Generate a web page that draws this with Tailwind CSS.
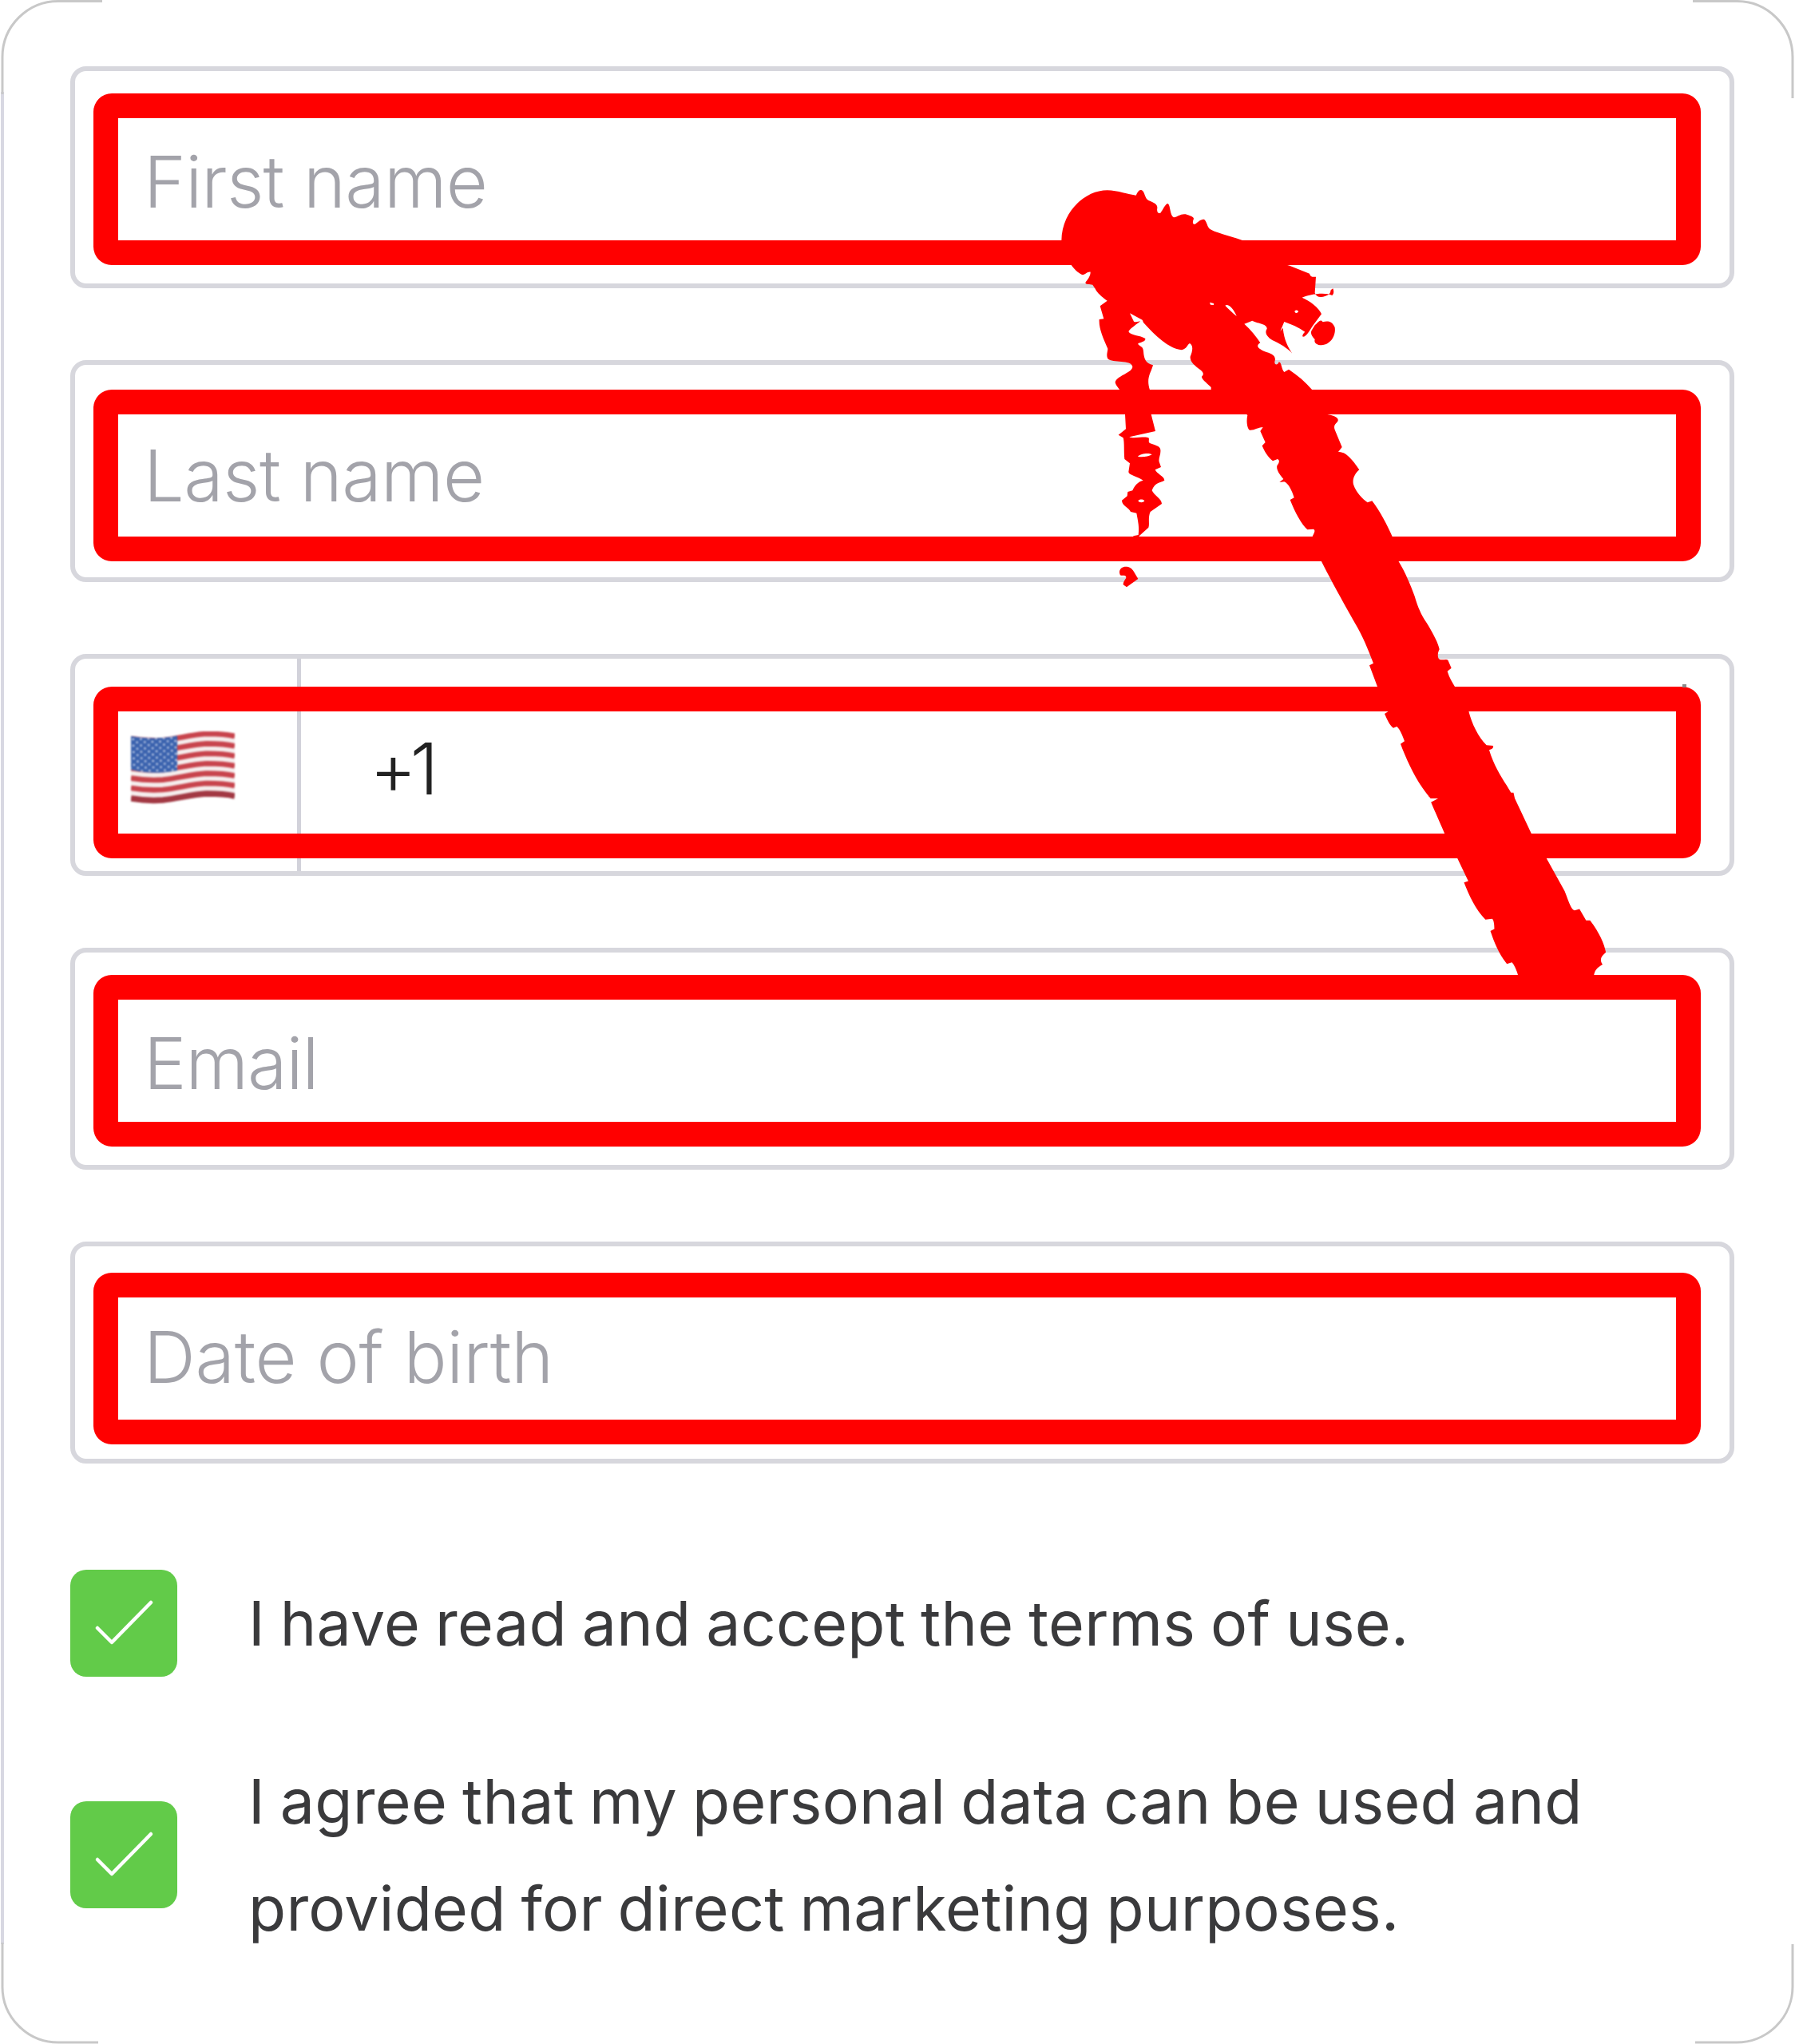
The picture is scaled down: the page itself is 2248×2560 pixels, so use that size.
<!DOCTYPE html>
<html lang="en">
<head>
  <meta charset="UTF-8" />
  <title>Personal details</title>
  <script src="https://cdn.jsdelivr.net/npm/@tailwindcss/browser@4"></script>
</head>
<body class="bg-white">
  <div class="relative w-[2248px] h-[2560px] overflow-hidden bg-white font-['Inter',sans-serif] pt-[83px] pl-[88px] pr-[76px]">

    <!-- Fields -->
    <div class="flex flex-col gap-[90px]">
      <div class="relative h-[278px] border-[6px] border-[#d7d7dd] rounded-[20px] flex items-center pl-[86px] pt-[10px] text-[90px] font-light tracking-[-0.8px] text-[#a3a3aa]">
        First name
        <div class="absolute left-[23px] right-[36px] top-[28px] h-[215px] border-[31px] border-[#ff0000] rounded-[23px]"></div>
      </div>

      <div class="relative h-[278px] border-[6px] border-[#d7d7dd] rounded-[20px] flex items-center pl-[86px] pt-[10px] text-[90px] font-light tracking-[-0.6px] text-[#a3a3aa]">
        Last name
        <div class="absolute left-[23px] right-[36px] top-[31px] h-[215px] border-[31px] border-[#ff0000] rounded-[23px]"></div>
      </div>

      <!-- Phone -->
      <div class="relative h-[278px] border-[6px] border-[#d7d7dd] rounded-[20px] flex">
        <div class="w-[283px] h-full border-r-[5px] border-[#d2d2da] flex items-center pl-[70px] pt-[8px]">
          <svg class="w-[130px] h-[92px] blur-[0.8px]" viewBox="0 0 130 92">
            <defs>
              <pattern id="stars" width="9.6" height="8" patternUnits="userSpaceOnUse" patternTransform="rotate(-2)">
                <circle cx="2.4" cy="2" r="1.2" fill="#e6ebf7" />
                <circle cx="7.2" cy="6" r="1.2" fill="#e6ebf7" />
              </pattern>
            </defs>
            <path d="M0 6C12 8 25 9 40 8C60 6 75 1 95 0C110 0 122 1 130 3V85C122 82 110 79 95 80C75 81 60 87 40 90C25 92 12 90 0 86Z" fill="#f5eded" />
            <g fill="none" stroke="#c8444d" stroke-width="6.6">
              <path d="M0 9C12 11 25 12 40 11C60 9 75 4 95 3C110 3 122 4 130 6" />
              <path transform="translate(0 12.4)" d="M0 9C12 11 25 12 40 11C60 9 75 4 95 3C110 3 122 4 130 6" />
              <path transform="translate(0 24.8)" d="M0 9C12 11 25 12 40 11C60 9 75 4 95 3C110 3 122 4 130 6" />
              <path transform="translate(0 37.2)" d="M0 9C12 11 25 12 40 11C60 9 75 4 95 3C110 3 122 4 130 6" />
              <path transform="translate(0 49.6)" d="M0 9C12 11 25 12 40 11C60 9 75 4 95 3C110 3 122 4 130 6" />
              <path transform="translate(0 62)" d="M0 9C12 11 25 12 40 11C60 9 75 4 95 3C110 3 122 4 130 6" />
              <path transform="translate(0 75)" stroke="#a23843" stroke-width="7.5" d="M0 9C12 11 25 12 40 11C60 9 75 4 95 3C110 3 122 4 130 6" />
            </g>
            <path d="M0 6C12 8 25 9 40 8C46 7.4 52 6.5 58 5.5V49C52 50 46 51 40 51.5C25 52.5 12 51 0 48Z" fill="#3a62ae" />
            <path d="M0 6C12 8 25 9 40 8C46 7.4 52 6.5 58 5.5V49C52 50 46 51 40 51.5C25 52.5 12 51 0 48Z" fill="url(#stars)" />
          </svg>
        </div>
        <div class="flex items-center pl-[86px] pt-[8px] text-[90px] font-light tracking-[-8px] text-[#222222]">+1</div>
        <div class="absolute left-[23px] right-[36px] top-[35px] h-[215px] border-[31px] border-[#ff0000] rounded-[23px]"></div>
        <div class="absolute left-[2013px] top-[32px] w-[5px] h-[4px] bg-[#8a8a8a]"></div>
      </div>

      <div class="relative h-[278px] border-[6px] border-[#d7d7dd] rounded-[20px] flex items-center pl-[86px] pt-[10px] text-[90px] font-light tracking-[-1px] text-[#a3a3aa]">
        Email
        <div class="absolute left-[23px] right-[36px] top-[28px] h-[215px] border-[31px] border-[#ff0000] rounded-[23px]"></div>
      </div>

      <div class="relative h-[278px] border-[6px] border-[#d7d7dd] rounded-[20px] flex items-center pl-[86px] pt-[10px] text-[90px] font-light tracking-[-0.25px] text-[#a3a3aa]">
        Date of birth
        <div class="absolute left-[23px] right-[36px] top-[33px] h-[215px] border-[31px] border-[#ff0000] rounded-[23px]"></div>
      </div>
    </div>

    <!-- Consents -->
    <div class="mt-[133px] flex flex-col gap-[89px] text-[77px] leading-[134px] tracking-[0.25px] [word-spacing:-3px] font-[430] text-[#3a3a3c]">
      <div class="flex items-center gap-[89px]">
        <div class="w-[134px] h-[134px] shrink-0 rounded-[20px] bg-[#62cb49]">
          <svg class="w-full h-full" viewBox="0 0 134 134" fill="none" stroke="#ffffff" stroke-width="4.5" stroke-linecap="round" stroke-linejoin="round"><path d="M34 73L52 91L101 41" /></svg>
        </div>
        <span>I have read and accept the terms of use.</span>
      </div>
      <div class="flex items-center gap-[89px]">
        <div class="w-[134px] h-[134px] shrink-0 rounded-[20px] bg-[#62cb49]">
          <svg class="w-full h-full" viewBox="0 0 134 134" fill="none" stroke="#ffffff" stroke-width="4.5" stroke-linecap="round" stroke-linejoin="round"><path d="M34 73L52 91L101 41" /></svg>
        </div>
        <span>I agree that my personal data can be used and<br />provided for direct marketing purposes.</span>
      </div>
    </div>

    <!-- Window edge and hand-drawn arrow stroke on top of the page -->
    <svg class="absolute inset-0 w-full h-full pointer-events-none" viewBox="0 0 2248 2560" fill="none">
      <path d="M3 115V2435" stroke="#d8d8e2" stroke-width="4" />
      <g stroke="#c8c8c8" stroke-width="3">
        <path d="M128 1.5H73A70 70 0 0 0 3 72V118" />
        <path d="M2120 1.5H2174A70 70 0 0 1 2245 72V123" />
        <path d="M3 2433V2487A70 70 0 0 0 73 2558H123" />
        <path d="M2245 2435V2487A70 70 0 0 1 2174 2558H2123" />
      </g>

      <g fill="#ff0000">
        <g transform="translate(1300 220) scale(0.33333)">
          <path fill-rule="evenodd" d="M88 244C90 130 180 55 260 55C300 55 340 72 368 74C375 60 380 50 390 55C402 62 400 85 415 93C430 100 450 105 448 122C445 135 452 145 460 140C470 128 478 105 488 105C498 112 495 150 510 157C525 155 535 142 555 145C570 150 585 155 585 162C580 172 580 185 590 182C600 175 615 160 625 165C635 175 635 190 645 200C680 220 730 228 770 244L800 300L945 338L1020 368C1022 378 1030 382 1044 380L1040 440C1045 455 1060 460 1080 452C1090 450 1098 445 1100 430L1108 424C1112 432 1112 445 1105 450C1080 436 1020 445 992 458C1020 470 1055 495 1065 520L1035 560C1020 580 1010 605 995 605C990 600 1000 590 1003 587C980 570 950 558 925 549L910 585L920 572C925 620 940 645 955 668C940 650 905 628 880 618C860 605 850 590 860 575C862 555 820 555 805 545L775 557C800 580 820 605 835 628C815 640 830 650 850 660C875 668 895 675 890 695C885 712 900 715 905 700C915 700 915 730 925 738L942 728C975 750 1005 775 1030 805L1030 850L650 850L650 795C630 775 615 765 615 755C625 745 620 738 610 730C590 715 570 700 572 680C580 660 585 640 570 630C560 635 560 650 540 655C490 650 440 600 396 552L392 542L345 517L360 548C368 552 378 548 385 546C370 560 350 570 340 585C345 600 385 600 403 612C405 625 385 625 375 632C385 645 395 640 396 660C398 690 405 705 432 712C425 740 405 760 420 805L425 897L441 960L343 982C360 990 400 978 415 985C420 990 412 1000 420 1005C435 1012 460 1015 460 1030C462 1050 452 1060 455 1075L462 1095L440 1105C445 1120 475 1130 475 1145C460 1155 440 1150 428 1183C435 1200 465 1215 465 1233L422 1263C412 1285 420 1310 415 1322L380 1354L380 1400L358 1400L358 1354L377 1350C380 1320 378 1310 370 1268L348 1263C340 1245 315 1240 315 1220L335 1204L337 1188L355 1183C362 1165 375 1150 395 1145C375 1130 340 1125 340 1113L345 1081L325 1065C322 1040 325 1000 320 985L302 974L330 952L327 896L307 850L307 805C300 795 290 785 290 775C300 750 355 740 355 718C350 690 280 705 262 688C255 675 262 660 262 650C245 610 228 575 230 540L247 538L233 490L260 470C240 455 222 440 215 425L205 410C195 408 178 410 178 402C185 390 197 380 197 362C185 360 175 375 165 372C150 365 135 350 125 336ZM375 1055C385 1045 415 1040 428 1048C415 1055 390 1060 375 1055ZM376 1222C380 1215 396 1215 400 1222C396 1230 380 1230 376 1222ZM645 476L660 480L660 486L648 485ZM703 488C715 480 735 500 746 528C730 515 715 500 703 488ZM964 510C968 503 978 505 978 511C975 518 966 518 964 510Z" />
          <path d="M1040 562C1050 555 1060 535 1070 550C1085 545 1105 545 1115 570C1120 600 1100 635 1065 637C1050 637 1035 630 1040 615C1030 605 1020 590 1030 578Z" />
          <path d="M306 1490C306 1466 345 1460 360 1488L376 1515L333 1546L320 1537C320 1520 338 1512 328 1504C318 1498 308 1510 306 1490Z" />
        </g>
        <g transform="translate(1550 500) scale(0.33333)">
          <path d="M15 40L337 57C360 60 385 70 375 85C365 95 360 100 365 115L392 180L378 198C410 195 440 240 457 265C440 280 430 300 435 320C445 350 470 375 488 388L505 382C535 420 560 470 582 518L605 610C630 650 650 700 665 740C680 790 690 810 710 840C735 880 755 920 758 940C750 955 750 975 760 978C775 980 785 975 790 980L803 1010L788 1022C795 1045 805 1062 816 1080L868 1172C880 1220 905 1270 935 1300L960 1302C962 1312 955 1315 945 1318C960 1370 990 1420 1010 1450L1040 1500L725 1500C680 1450 640 1370 612 1295L627 1285C620 1265 610 1240 598 1230L585 1235C570 1225 560 1200 552 1182L567 1172L525 1080L495 1000L510 992C490 940 470 890 440 840C400 770 345 670 315 610L280 518C285 505 295 495 285 488L262 490C240 470 215 425 197 378L212 370C205 345 190 315 175 310L157 312L172 300C155 280 145 265 148 250C155 240 160 230 150 225L132 232C115 220 100 195 92 175L104 162L85 120L95 105C80 105 60 118 45 116C35 110 32 80 37 60Z" />
        </g>
        <g transform="translate(1600 700) scale(0.41322 0.35714)">
          <path d="M460 820L715 820L719 840L770 965L815 1050L870 1165C885 1210 890 1230 900 1233L915 1228L935 1268L947 1268C975 1310 990 1350 995 1380C980 1395 975 1405 985 1422C975 1432 960 1435 958 1470L731 1470C725 1440 715 1420 710 1415L695 1420C670 1385 655 1340 645 1305L657 1298C657 1280 655 1265 650 1262L630 1265C600 1230 580 1180 565 1135L578 1130L545 1050L507 965C490 920 475 880 465 853L490 838C480 832 465 833 458 833Z" />
        </g>
      </g>
    </svg>
  </div>
</body>
</html>
